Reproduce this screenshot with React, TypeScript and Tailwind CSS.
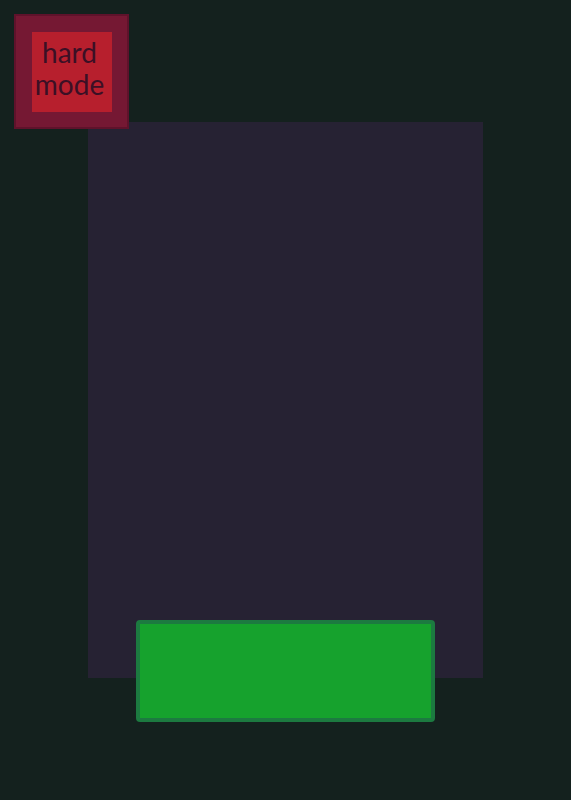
import { useState } from "react";

function HardModeButton({ active, onToggle }: { active: boolean; onToggle: () => void }) {
  return (
    <button
      type="button"
      aria-pressed={active}
      onClick={onToggle}
      className="relative z-10 ml-3.5 flex size-[115px] items-center justify-center border-2 border-[#5f122b] bg-[#751833]"
    >
      <span className="flex size-20 flex-col items-center justify-center bg-[#b71f2d] pr-1 pb-2 font-['Lato',sans-serif] text-[28px] leading-8 text-[#3b1025]">
        <span>hard</span>
        <span>mode</span>
      </span>
    </button>
  );
}

export default function App() {
  const [hardMode, setHardMode] = useState(false);
  const [started, setStarted] = useState(false);

  return (
    <main className="min-h-screen bg-[#14211e] pt-3.5 pb-10">
      <HardModeButton active={hardMode} onToggle={() => setHardMode(!hardMode)} />
      <section className="mx-[87px] -mt-[7px] px-[49px]">
        {/* the start button hangs over the bottom edge of the board */}
        <div className="-mx-12 h-[556px] bg-[#262233]" />
        <button
          type="button"
          aria-label="Start"
          aria-pressed={started}
          onClick={() => setStarted(!started)}
          className="relative -mt-[58px] block h-[102px] w-full rounded-sm border-4 border-[#1c7a40] bg-[#16a22d]"
        />
      </section>
    </main>
  );
}
